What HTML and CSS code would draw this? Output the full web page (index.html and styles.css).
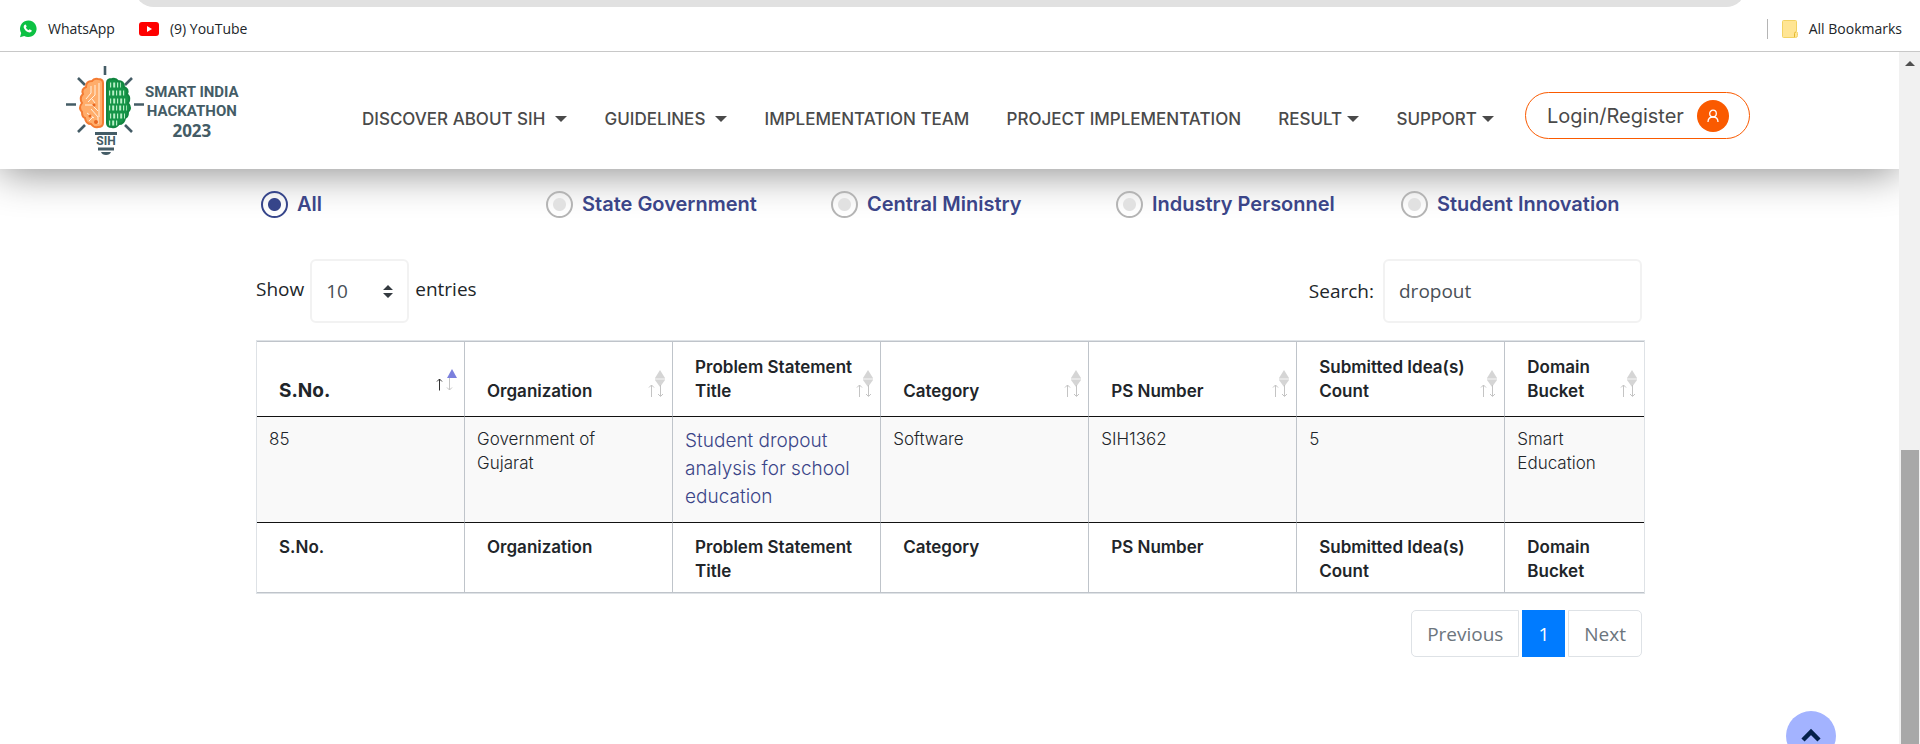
FILE: index.html
```html
<!DOCTYPE html>
<html lang="en">
<head>
<meta charset="utf-8">
<title>Smart India Hackathon 2023</title>
<link rel="stylesheet" href="styles.css">
</head>
<body>
<svg class="defs" aria-hidden="true">
  <symbol id="sort" viewBox="0 0 18 30">
    <path d="M12 2l5 8H7z" fill="#d5d5d5"/>
    <path d="M7 11h10" stroke="#e6e6e6" stroke-width="2"/>
    <path d="M7 12h10l-5 7z" fill="#d5d5d5"/>
    <path d="M3.500 29V17M1 19.500l2.500-2.500 2.500 2.500M12.500 17v11M10 26l2.500 2.500 2.500-2.500" fill="none" stroke="#c4c4c4"/>
  </symbol>
  <symbol id="sort-asc" viewBox="0 0 24 24">
    <path d="M18 1l5 9H13z" fill="#7b80dd"/>
    <path d="M5.500 22.500V11M3 13.500L5.500 11 8 13.500" fill="none" stroke="#333"/>
    <path d="M15.500 10v12M13 19.500l2.500 2.500 2.500-2.500" fill="none" stroke="#c4c4c4"/>
  </symbol>
</svg>

<div class="bookmarks">
  <div class="omnibox"></div>
  <a class="bookmark" href="#">
    <svg width="18" height="18" viewBox="0 0 18 18"><path d="M1 17.300l1.200-4.200A8.300 8.300 0 1 1 5.200 16z" fill="#0dc143"/><path d="M5.800 4.700c.6-.5 1-.3 1.200.2l.6 1.300c.1.400-.4.900-.7 1.200.6 1.300 1.600 2.200 2.900 2.800.4-.4.800-1 1.200-.8l1.500.8c.5.300.2 1.100-.3 1.600-1 .8-2.200.7-3.500.1-1.900-.9-3.200-2.400-3.900-4.200-.3-1.100 0-2.300 1-3z" fill="#fff"/></svg>
    WhatsApp
  </a>
  <a class="bookmark" href="#">
    <svg width="20" height="14" viewBox="0 0 20 14"><rect width="20" height="14" rx="3" fill="#f00"/><path d="M8 4l5 3-5 3z" fill="#fff"/></svg>
    (9) YouTube
  </a>
  <a class="bookmark all-bookmarks" href="#">
    <svg width="16" height="18" viewBox="0 0 16 18"><path d="M1.500.5h12q1 0 1 1v10q1 .5 1 2v2q0 2-2 2h-12q-1 0-1-1v-15q0-1 1-1z" fill="#ffe594" stroke="#f2d264"/><path d="M12.500 17v-3.500q0-1.500 1.500-1.500" fill="none" stroke="#e3b92e"/></svg>
    All Bookmarks
  </a>
</div>

<div class="viewport">
  <div class="page">
    <header class="header">
      <a class="logo" href="#">
        <svg width="80" height="92" viewBox="0 0 80 92">
          <g stroke="#445c66" stroke-width="2.600" fill="none">
            <path d="M40 1v9M13 13l7 7M67 13l-7 7M1 39.500h10M69 39.500h10M13 67l7-7M67 67l-7-7"/>
          </g>
          <path d="M38 18q0-4-5-4-4-1-6 2-6 0-6 6-5 2-3 7-4 4-1 9-4 5 0 9 0 5 3 6 1 6 6 6 3 4 7 3 5 0 5-4z" fill="#ffad6b" stroke="#f47b32" stroke-width="2"/>
          <path d="M34 18v34M30 20v10l-7 7M26 21v7l-5 6M20 40h7l6 6M30 38l-3-4M22 48l7 5M26 44l7 8v7M24 56l4-4" fill="none" stroke="#fff0de"/>
          <g fill="#e96722"><circle cx="29" cy="40" r="1.500"/><circle cx="25" cy="51" r="1.500"/><circle cx="31" cy="57" r="2"/></g>
          <path d="M42 18q0-4 5-4 4-1 6 2 6 0 6 6 5 2 3 7 4 4 1 9 4 5 0 9 0 5-3 6-1 6-6 6-3 4-7 3-5 0-5-4z" fill="#159447" stroke="#118540" stroke-width="2"/>
          <g stroke="#b6efc5" stroke-width="5" fill="none" stroke-dasharray="1.200 2 2 1.800">
            <path d="M45 20h11M44 28h16M45 36h17M44 43h18M45 51h15M44 58h9"/>
          </g>
          <path d="M30 68.500h22M33 84h16" stroke="#445c66" stroke-width="3"/>
          <path d="M36 87h10q-1 3-5 3t-5-3z" fill="#445c66"/>
          <text class="logo-sih" x="41" y="80" text-anchor="middle">SIH</text>
        </svg>
        <span class="logo-text">SMART INDIA<br>HACKATHON<br><span class="logo-year">2023</span></span>
      </a>
      <nav class="nav">
        <a class="nav-link spaced" href="#">DISCOVER ABOUT SIH<span class="caret"></span></a>
        <a class="nav-link spaced" href="#">GUIDELINES<span class="caret"></span></a>
        <a class="nav-link" href="#">IMPLEMENTATION TEAM</a>
        <a class="nav-link" href="#">PROJECT IMPLEMENTATION</a>
        <a class="nav-link" href="#">RESULT<span class="caret"></span></a>
        <a class="nav-link" href="#">SUPPORT<span class="caret"></span></a>
      </nav>
      <button class="login" type="button">Login/Register
        <span class="login-icon"><svg width="12" height="14" viewBox="0 0 12 14" fill="none" stroke="#fff" stroke-width="1.300"><circle cx="6" cy="4.500" r="3.300"/><path d="M1 13c0-3 2-5 5-5s5 2 5 5"/></svg></span>
      </button>
    </header>

    <main class="content">
      <div class="filters">
        <label class="filter"><input type="radio" name="type" checked>All</label>
        <label class="filter"><input type="radio" name="type">State Government</label>
        <label class="filter"><input type="radio" name="type">Central Ministry</label>
        <label class="filter"><input type="radio" name="type">Industry Personnel</label>
        <label class="filter"><input type="radio" name="type">Student Innovation</label>
      </div>

      <div class="controls">
        <div class="length">
          <label class="length-text" for="len">Show</label>
          <span class="select-wrap">
            <select id="len" class="field"><option>10</option><option>25</option></select>
            <svg class="select-arrows" width="10" height="13" viewBox="0 0 10 13"><path d="M5 0l5 5H0zM5 13l5-5H0z" fill="#343a40"/></svg>
          </span>
          <span class="length-text">entries</span>
        </div>
        <div class="search">
          <label for="q">Search:</label>
          <input id="q" class="field" type="text" value="dropout">
        </div>
      </div>

      <table class="table">
        <colgroup><col span="6" class="col"><col></colgroup>
        <thead>
          <tr>
            <th class="sorted">S.No.<svg class="sort-asc"><use href="#sort-asc"/></svg></th>
            <th>Organization<svg class="sort"><use href="#sort"/></svg></th>
            <th>Problem Statement Title<svg class="sort"><use href="#sort"/></svg></th>
            <th>Category<svg class="sort"><use href="#sort"/></svg></th>
            <th>PS Number<svg class="sort"><use href="#sort"/></svg></th>
            <th>Submitted Idea(s) Count<svg class="sort"><use href="#sort"/></svg></th>
            <th>Domain Bucket<svg class="sort"><use href="#sort"/></svg></th>
          </tr>
        </thead>
        <tbody>
          <tr>
            <td>85</td>
            <td>Government of Gujarat</td>
            <td><a class="title-link" href="#">Student dropout analysis for school education</a></td>
            <td>Software</td>
            <td>SIH1362</td>
            <td>5</td>
            <td>Smart Education</td>
          </tr>
        </tbody>
        <tfoot>
          <tr>
            <th>S.No.</th>
            <th>Organization</th>
            <th>Problem Statement Title</th>
            <th>Category</th>
            <th>PS Number</th>
            <th>Submitted Idea(s) Count</th>
            <th>Domain Bucket</th>
          </tr>
        </tfoot>
      </table>

      <div class="pagination">
        <a class="page-link first" href="#">Previous</a>
        <a class="page-link active" href="#">1</a>
        <a class="page-link last" href="#">Next</a>
      </div>
    </main>
  </div>
  <div class="scrollbar">
    <svg width="10" height="5" viewBox="0 0 10 5"><path d="M5 0l5 5H0z" fill="#505050"/></svg>
    <div class="thumb"></div>
  </div>
</div>

<button class="to-top" type="button" aria-label="Back to top"><svg width="22" height="14" viewBox="0 0 22 14"><path d="M3 12l8-8 8 8" fill="none" stroke="#04214a" stroke-width="4.500"/></svg></button>
</body>
</html>
```
FILE: styles.css
```css
* { box-sizing: border-box; }

body {
  margin: 0;
  height: 100vh;
  display: flex;
  flex-direction: column;
  overflow: hidden;
  background: #fff;
  color: #212529;
  font-family: "Open Sans", "Noto Sans", sans-serif;
}

a { color: inherit; text-decoration: none; }
button, input, select { font: inherit; color: inherit; }
.defs { display: none; }

/* bookmarks bar */
.bookmarks {
  position: relative;
  flex: none;
  display: flex;
  align-items: center;
  gap: 24px;
  height: 52px;
  padding: 6px 18px 0 19px;
  border-bottom: 1px solid #c8c8c8;
  font-size: 14px;
}
.omnibox {
  position: absolute;
  top: -33px;
  left: 134px;
  right: 174px;
  height: 40px;
  border-radius: 20px;
  background: #e1e1e1;
}
.bookmark { display: flex; align-items: center; gap: 11px; }
.all-bookmarks {
  margin-left: auto;
  height: 20px;
  padding-left: 14px;
  border-left: 1px solid #b5b5b5;
}

/* viewport */
.viewport {
  flex: 1;
  min-height: 0;
  display: flex;
}
.page { flex: 1; min-width: 0; overflow: hidden; }
.scrollbar {
  width: 21px;
  flex: none;
  display: flex;
  flex-direction: column;
  justify-content: space-between;
  padding: 9px 1px 0 2px;
  background: #f1f1f1;
}
.scrollbar svg { align-self: center; }
.thumb { height: 43%; background: #a8a8a8; }

/* header */
.header {
  position: relative;
  display: flex;
  align-items: center;
  height: 117px;
  padding: 0 149px 0 65px;
  background: #fff;
  box-shadow: 0 4px 40px rgba(0, 0, 0, .45);
  color: #4a4a4a;
  font-family: Inter, sans-serif;
}
.logo {
  display: flex;
  align-items: center;
  width: 180px;
  margin-right: 117px;
}
.logo-text {
  padding-top: 4px;
  color: #445c66;
  text-align: center;
  font: bold 15px/19px Roboto, sans-serif;
}
.logo-year { font-family: "Open Sans", sans-serif; font-size: 17px; }
.logo-sih { font: bold 12px Roboto, sans-serif; fill: #445c66; }
.nav {
  flex: 1;
  display: flex;
  justify-content: space-between;
  margin-right: 31px;
  padding-top: 17px;
  font-size: 17px;
  font-weight: 500;
  line-height: 24px;
  white-space: nowrap;
}
.nav-link { display: flex; align-items: center; gap: 5px; }
.spaced { gap: 10px; }
.caret {
  border: 6px solid transparent;
  border-top-color: #4a4a4a;
  border-bottom: 0;
}
.login {
  display: flex;
  align-items: center;
  justify-content: space-between;
  width: 225px;
  height: 47px;
  margin-top: 10px;
  padding: 0 20px 0 21px;
  border: 1px solid #fa5a00;
  border-radius: 24px;
  background: #fff;
  font-size: 20px;
}
.login-icon {
  display: flex;
  align-items: center;
  justify-content: center;
  width: 32px;
  height: 32px;
  border-radius: 50%;
  background: #fa5a00;
}

/* content */
.content {
  max-width: 1391px;
  margin: 0 auto;
  padding-left: 2px;
  font-size: 19px;
}
.filters {
  position: relative;
  display: grid;
  grid-template-columns: repeat(5, 1fr);
  margin: 21px -41px 0 5px;
  color: #3b4588;
  font: 600 20px/28px Inter, sans-serif;
}
.filter { display: flex; align-items: center; gap: 9px; }
.filter input {
  appearance: none;
  width: 27px;
  height: 27px;
  margin: 0;
  border: 2px solid #b4b4b4;
  border-radius: 50%;
  background: radial-gradient(circle, #e1e1e1 6px, transparent 7px);
}
.filter input:checked {
  border-color: #36458a;
  background: radial-gradient(circle, #36458a 6px, transparent 7px);
}

.controls {
  display: flex;
  justify-content: space-between;
  margin: 41px 3px 17px 0;
}
.length, .search { display: flex; align-items: center; }
.length { gap: 6px; }
.length-text { padding-bottom: 5px; }
.search { gap: 9px; }
.select-wrap { position: relative; }
.field {
  display: block;
  appearance: none;
  height: 64px;
  padding: 0 14px;
  border: 2px solid #f2f2f2;
  border-radius: 6px;
  background: #fff;
  color: #495057;
}
select.field { width: 99px; }
input.field { width: 259px; }
.select-arrows {
  position: absolute;
  right: 16px;
  top: 26px;
}

/* table */
.table {
  width: 100%;
  table-layout: fixed;
  border-collapse: separate;
  border-spacing: 0;
  border: 1px solid #dee2e6;
  font: 17px/24px Inter, sans-serif;
}
.col { width: 15%; }
.table th, .table td {
  position: relative;
  padding: 10px 20px 11px 12px;
  border-right: 1px solid #bfc4ca;
  text-align: left;
  vertical-align: top;
}
.table th:last-child, .table td:last-child { border-right: 0; }
.table th { padding: 12px 16px 9px 22px; font-weight: 600; }
.table thead th {
  padding: 13px 16px 13px 22px;
  border-top: 1px solid #bfc4ca;
  border-bottom: 1px solid #111;
  vertical-align: bottom;
}
.table thead .sorted { font-size: 19px; font-weight: 700; }
.table td { background: #f9f9f9; font-weight: 300; border-bottom: 1px solid #111; }
.table tfoot th { border-bottom: 1px solid #bfc4ca; }
.title-link { color: #3b4588; font-size: 19px; line-height: 28px; }
.sort, .sort-asc { position: absolute; right: 6px; }
.sort { width: 18px; height: 30px; bottom: 18px; }
.sort-asc { width: 24px; height: 24px; bottom: 24px; }

/* pagination */
.pagination {
  display: flex;
  justify-content: flex-end;
  gap: 3px;
  margin: 16px 3px 0 0;
  line-height: 24px;
}
.page-link {
  padding: 11px 15px 10px;
  border: 1px solid #dee2e6;
  color: #6c757d;
}
.first { border-radius: 5px 0 0 5px; }
.last { border-radius: 0 5px 5px 0; }
.page-link.active { border-color: #007bff; background: #007bff; color: #fff; }

.to-top {
  position: fixed;
  right: 84px;
  bottom: -17px;
  width: 50px;
  height: 50px;
  padding: 0;
  border: 0;
  border-radius: 50%;
  background: #a3b3ff;
}
```
